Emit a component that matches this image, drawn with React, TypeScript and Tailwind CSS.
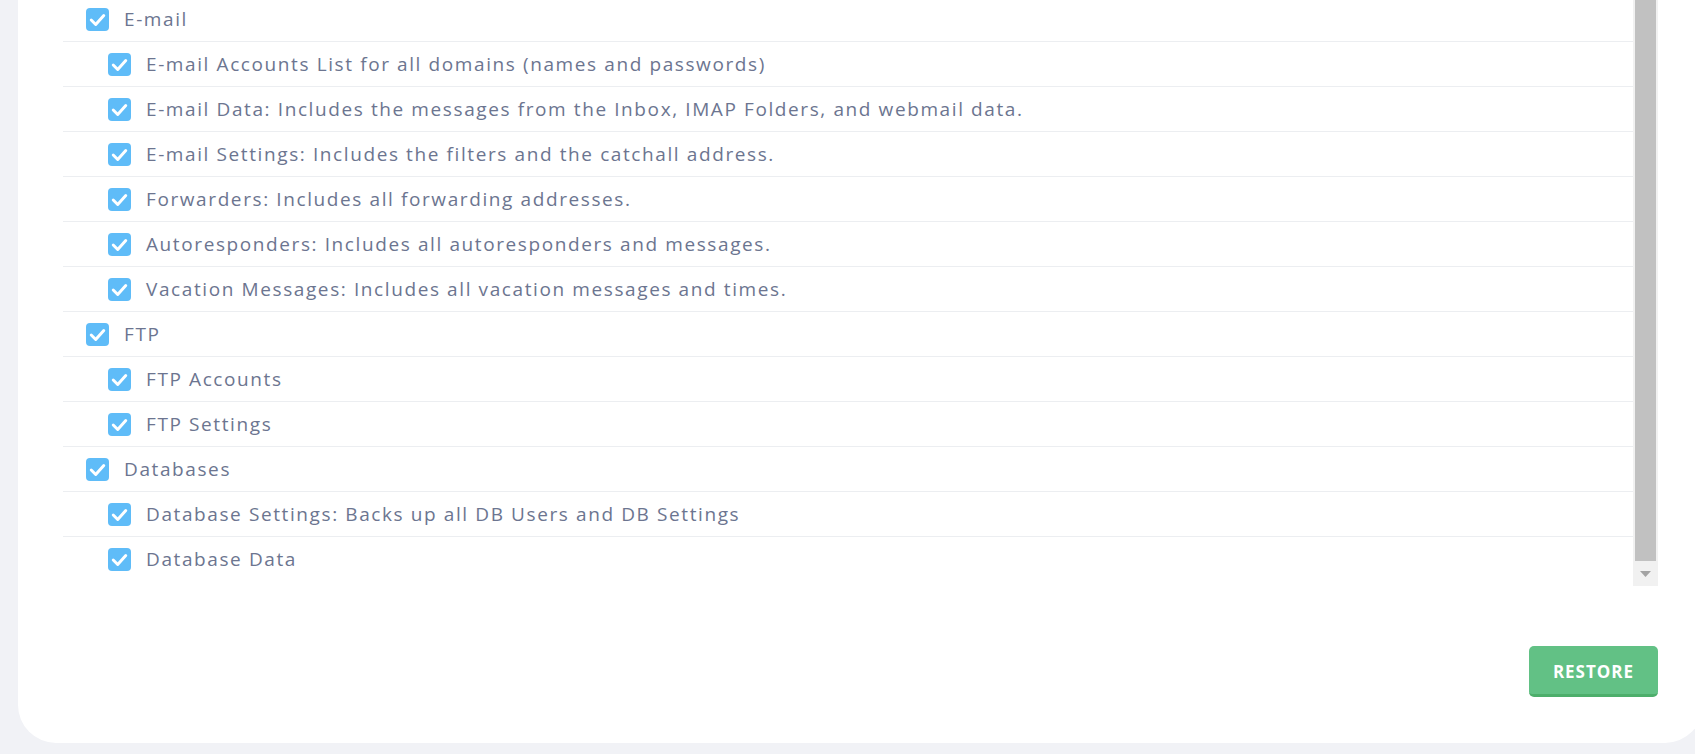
const rows: { label: string; sub: boolean }[] = [
  { label: "E-mail", sub: false },
  { label: "E-mail Accounts List for all domains (names and passwords)", sub: true },
  { label: "E-mail Data: Includes the messages from the Inbox, IMAP Folders, and webmail data.", sub: true },
  { label: "E-mail Settings: Includes the filters and the catchall address.", sub: true },
  { label: "Forwarders: Includes all forwarding addresses.", sub: true },
  { label: "Autoresponders: Includes all autoresponders and messages.", sub: true },
  { label: "Vacation Messages: Includes all vacation messages and times.", sub: true },
  { label: "FTP", sub: false },
  { label: "FTP Accounts", sub: true },
  { label: "FTP Settings", sub: true },
  { label: "Databases", sub: false },
  { label: "Database Settings: Backs up all DB Users and DB Settings", sub: true },
  { label: "Database Data", sub: true },
];

function Check() {
  return (
    <span className="grid h-[23px] w-[23px] shrink-0 place-items-center rounded-[4px] bg-[#5fbcf8]">
      <svg viewBox="0 0 22 22" className="h-[23px] w-[23px]" fill="none">
        <path d="M5 11.5l4.3 4.3L17 7.2" stroke="white" strokeWidth="2.8" strokeLinecap="round" strokeLinejoin="round" />
      </svg>
    </span>
  );
}

export default function App() {
  return (
    <div className="h-[754px] w-[1695px] overflow-hidden bg-[#f1f2f6] font-['Open_Sans',sans-serif]">
      <div className="ml-[18px] w-[1685px] rounded-b-[38px] bg-white pb-[46px] pl-[45px] pr-[45px]">
        <div className="flex h-[586px]">
          <div className="h-full flex-1 overflow-hidden">
            <div className="-mt-[3px] pb-[5px]">
              {rows.map((r, i) => (
                <div
                  key={r.label}
                  className={`flex h-[45px] items-center gap-[15px] ${r.sub ? "pl-[45px]" : "pl-[23px]"} ${
                    i < rows.length - 1 ? "border-b border-[#eceef1]" : ""
                  }`}
                >
                  <Check />
                  <span className="text-[19px] tracking-[1.6px] text-[#6c7590]">{r.label}</span>
                </div>
              ))}
            </div>
          </div>
          <div className="flex w-[25px] flex-col bg-[#f1f1f1]">
            <div className="mx-[2px] flex-1 bg-[#c1c1c1]" />
            <div className="grid h-[25px] place-items-center">
              <svg viewBox="0 0 11 6" className="h-[6px] w-[11px]">
                <path d="M0 0h11L5.5 6z" fill="#a3a3a3" />
              </svg>
            </div>
          </div>
        </div>
        <div className="mt-[60px] flex justify-end">
          <button className="h-[51px] w-[129px] rounded-[5px] border-b-[3px] border-[#4dae6b] bg-[#62c185] pt-[3px] text-[17px] font-bold tracking-[1px] text-white">
            RESTORE
          </button>
        </div>
      </div>
    </div>
  );
}
